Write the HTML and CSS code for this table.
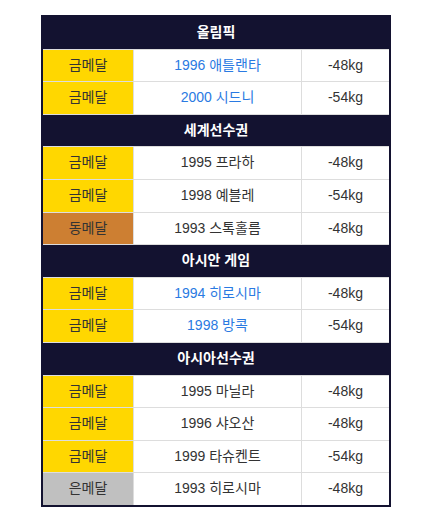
FILE: index.html
```html
<!DOCTYPE html>
<html lang="ko">
<head>
<meta charset="utf-8">
<link rel="stylesheet" href="styles.css">
</head>
<body>
<div class="wrap">
<table class="medals">
  <colgroup><col class="c1"><col class="c2"><col class="c3"></colgroup>
  <tr><th colspan="3">올림픽</th></tr>
  <tr><td class="gold">금메달</td><td class="link">1996 애틀랜타</td><td>-48kg</td></tr>
  <tr><td class="gold">금메달</td><td class="link">2000 시드니</td><td>-54kg</td></tr>
  <tr><th colspan="3">세계선수권</th></tr>
  <tr><td class="gold">금메달</td><td>1995 프라하</td><td>-48kg</td></tr>
  <tr><td class="gold">금메달</td><td>1998 예블레</td><td>-54kg</td></tr>
  <tr><td class="bronze">동메달</td><td>1993 스톡홀름</td><td>-48kg</td></tr>
  <tr><th colspan="3">아시안 게임</th></tr>
  <tr><td class="gold">금메달</td><td class="link">1994 히로시마</td><td>-48kg</td></tr>
  <tr><td class="gold">금메달</td><td class="link">1998 방콕</td><td>-54kg</td></tr>
  <tr><th colspan="3">아시아선수권</th></tr>
  <tr><td class="gold">금메달</td><td>1995 마닐라</td><td>-48kg</td></tr>
  <tr><td class="gold">금메달</td><td>1996 샤오산</td><td>-48kg</td></tr>
  <tr><td class="gold">금메달</td><td>1999 타슈켄트</td><td>-54kg</td></tr>
  <tr><td class="silver">은메달</td><td>1993 히로시마</td><td>-48kg</td></tr>
</table>
</div>
</body>
</html>
```

FILE: styles.css
```css
html, body {
  margin: 0;
  padding: 0;
  background: #fff;
}
body {
  font-family: "Liberation Sans", Arial, "Noto Sans CJK KR", sans-serif;
  font-size: 14px;
  color: #333;
}
.wrap {
  padding: 15px 0 0 41px;
}
.medals {
  border-collapse: collapse;
  border: 2px solid #131230;
  width: 350px;
  table-layout: fixed;
}
.c1 { width: 91px; }
.c2 { width: 167px; }
.c3 { width: 88px; }
.medals th,
.medals td {
  border: 1px solid #ddd;
  padding: 6px 4px;
  line-height: 19.6px;
  text-align: center;
  white-space: nowrap;
}
.medals th {
  background: #131230;
  color: #fff;
  font-weight: bold;
}
.medals td { background: #fff; }
.medals td.gold { background: #ffd700; }
.medals td.bronze { background: #cd7f32; }
.medals td.silver { background: #c0c0c0; }
.medals td.link { color: #2a7ae2; }
```
